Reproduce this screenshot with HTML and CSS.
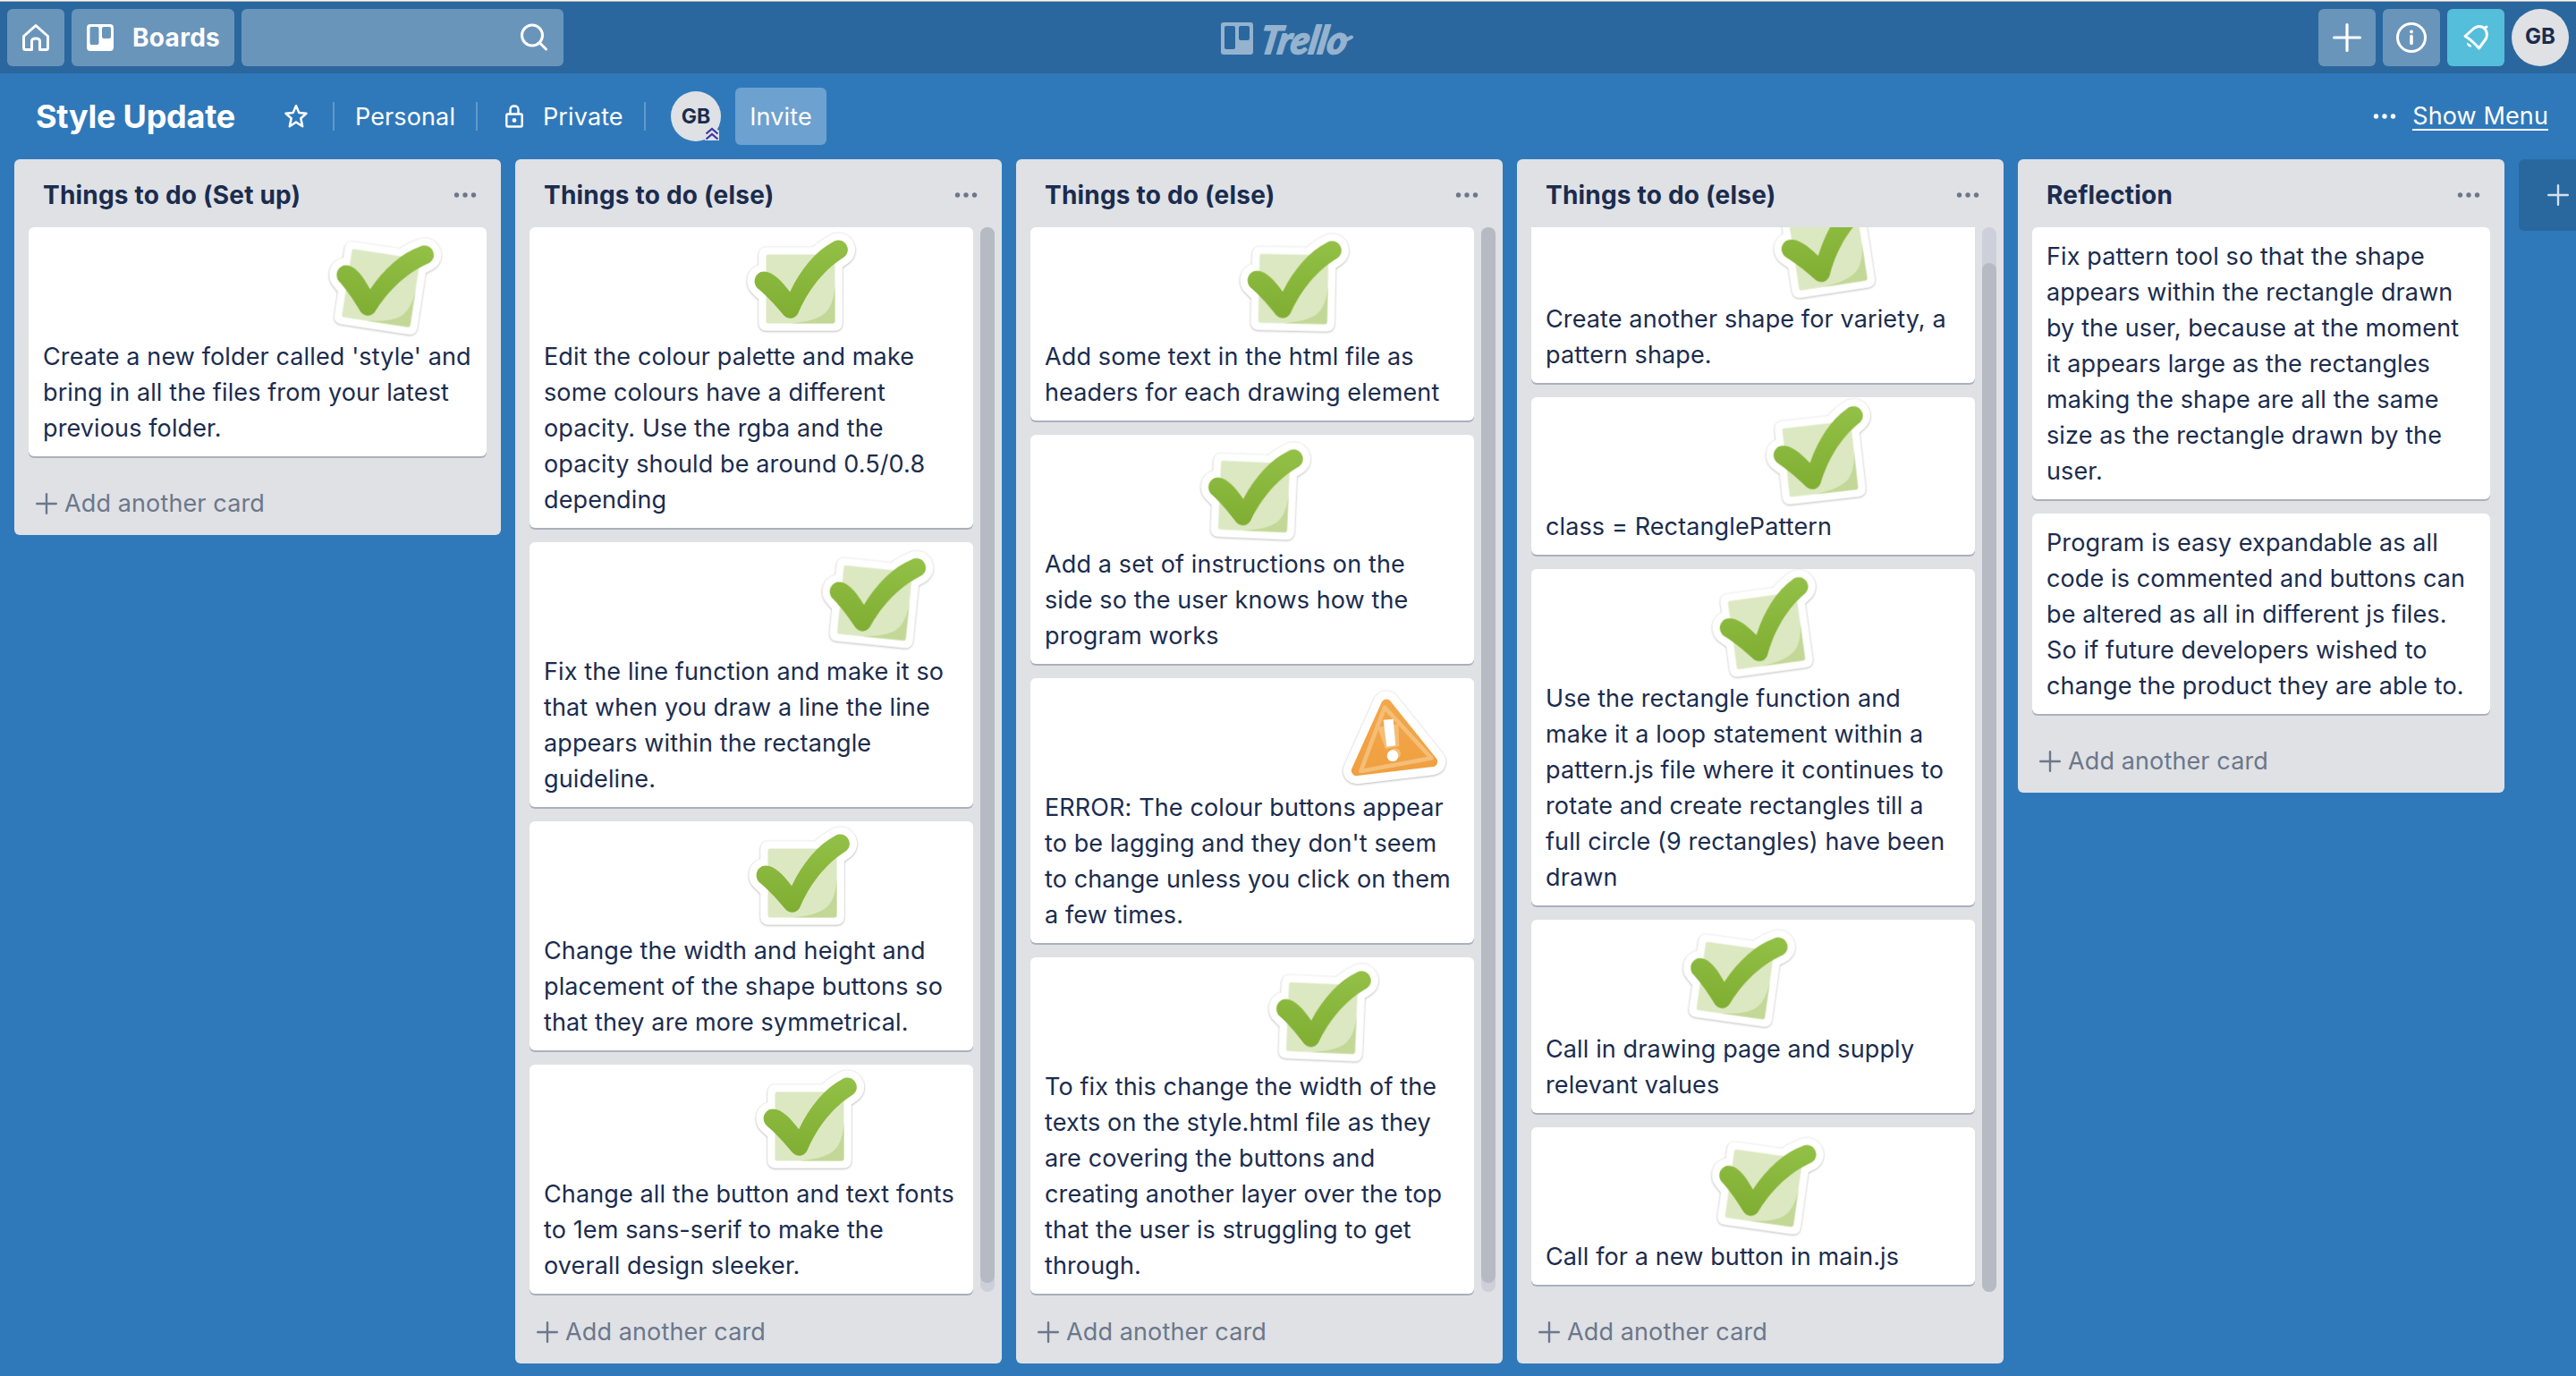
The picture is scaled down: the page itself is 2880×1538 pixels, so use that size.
FILE: index.html
```html
<!DOCTYPE html>
<html lang="en">
<head>
<meta charset="utf-8">
<title>Style Update | Trello</title>
<link rel="stylesheet" href="styles.css">
</head>
<body>
<svg class="defs" aria-hidden="true">
  <defs>
    <linearGradient id="tick-fill" x1="0" y1="0" x2="0" y2="1"><stop offset="0" stop-color="#93c046"/><stop offset="1" stop-color="#7fae33"/></linearGradient>
    <linearGradient id="warn-fill" x1="0" y1="0" x2="0" y2="1"><stop offset="0" stop-color="#f3a64a"/><stop offset="1" stop-color="#f0a040"/></linearGradient>
    <path id="tick" d="M131 159C160 159 190 190 218 227C255 150 305 90 362 60C378 50 395 54 405 66C417 82 413 100 400 110C345 145 290 200 248 293C240 317 215 322 198 307C175 280 150 250 115 220C95 205 95 180 110 167C116 161 124 159 131 159Z"/>
    <symbol id="check" viewBox="-80 -80 160 160">
      <g transform="scale(.3333) translate(-253.5 -217.5)">
        <g fill="#fff" stroke="#fff" stroke-width="50" stroke-linejoin="round"><rect x="138" y="102" width="231" height="231"/><use href="#tick"/></g>
        <rect x="138" y="102" width="231" height="231" rx="7" fill="#dce8c2"/>
        <path d="M369 205C366 255 352 288 330 303C300 322 270 328 222 333H362Q369 333 369 326Z" fill="#c3d897"/>
        <use href="#tick" fill="url(#tick-fill)"/>
      </g>
    </symbol>
    <symbol id="warning" viewBox="-80 -80 160 160">
      <g transform="scale(.3333) translate(-240 -195)">
        <path d="M210 82L364 274L110 304Z" fill="#fff" stroke="#fff" stroke-width="90" stroke-linejoin="round"/>
        <path d="M210 82L364 274L110 304Z" fill="url(#warn-fill)" stroke="url(#warn-fill)" stroke-width="35" stroke-linejoin="round"/>
        <path d="M204 92L361 262L124 306Z" fill="none" stroke="#f4be77" stroke-width="14" stroke-linejoin="round"/>
        <path d="M180 158L250 148L253 222L207 232Z" fill="#f4be77"/><circle cx="240" cy="247" r="18" fill="#f4be77"/>
        <path d="M200 134L233 131L241 220L211 224Z" fill="#fff"/><circle cx="231" cy="254" r="19" fill="#fff"/>
      </g>
    </symbol>
    <symbol id="plus" viewBox="0 0 24 24"><path d="M12 1.2V22.8M1.2 12H22.8" fill="none" stroke="currentColor" stroke-width="2.4" stroke-linecap="round"/></symbol>
    <symbol id="dots" viewBox="0 0 26 6"><g fill="currentColor"><circle cx="3.5" cy="3" r="2.7"/><circle cx="13" cy="3" r="2.7"/><circle cx="22.5" cy="3" r="2.7"/></g></symbol>
  </defs>
</svg>

<header class="topbar">
  <div class="group">
    <a class="btn home"><svg width="32" height="32" viewBox="0 0 32 32"><path d="M2.5 14.5L16 2.5L29.5 14.5V27.5Q29.5 29.5 27.5 29.5H20.5V20Q20.5 17 16 17T11.5 20V29.5H4.5Q2.5 29.5 2.5 27.5Z" fill="none" stroke="#fff" stroke-width="3" stroke-linejoin="round"/></svg></a>
    <a class="btn boards"><svg width="32" height="32" viewBox="0 0 32 32"><path fill="#fff" fill-rule="evenodd" d="M5 1H27Q31 1 31 5V27Q31 31 27 31H5Q1 31 1 27V5Q1 1 5 1ZM6 4Q4.5 4 4.5 6V22Q4.5 24 6 24H12.5Q14.5 24 14.5 22V6Q14.5 4 12.5 4ZM20 4Q18 4 18 6V15Q18 17 20 17H26Q28 17 28 15V6Q28 4 26 4Z"/></svg><span>Boards</span></a>
    <div class="btn search"><svg width="32" height="32" viewBox="0 0 32 32"><g fill="none" stroke="#fff" stroke-width="3" stroke-linecap="round"><circle cx="14" cy="13.5" r="11.5"/><path d="M22.5 22L29.5 29"/></g></svg></div>
  </div>
  <svg class="logo" width="152" height="52" viewBox="0 0 152 52"><path fill="currentColor" fill-rule="evenodd" d="M4 10H34Q37 10 37 13V43Q37 46 34 46H4Q1 46 1 43V13Q1 10 4 10ZM7 14Q5 14 5 16V38Q5 40 7 40H15Q17 40 17 38V16Q17 14 15 14ZM23 14Q21 14 21 16V28Q21 30 23 30H31Q33 30 33 28V16Q33 14 31 14Z"/><g transform="translate(43 45) skewX(-10)"><text class="wordmark" textLength="97" lengthAdjust="spacingAndGlyphs">Trello</text></g><path d="M136 29Q142 30 147 26.5" fill="none" stroke="currentColor" stroke-width="4" stroke-linecap="round"/></svg>
  <div class="group right">
    <a class="btn square"><svg width="32" height="32"><use href="#plus"/></svg></a>
    <a class="btn square"><svg width="36" height="36" viewBox="0 0 36 36"><circle cx="18" cy="18" r="15.5" fill="none" stroke="#fff" stroke-width="3"/><circle cx="18" cy="11.5" r="1.9" fill="#fff"/><path d="M18 16.5V24.5" stroke="#fff" stroke-width="3.6" stroke-linecap="round"/></svg></a>
    <a class="btn square bell"><svg width="32" height="32" viewBox="0 0 32 32"><path d="M4 14.5L14 5.5Q20 1.5 25.5 5.5Q30 11 27.5 17L19.5 28Q12 19 4 14.5ZM25.5 5.5L28 4" fill="none" stroke="#fff" stroke-width="3" stroke-linejoin="round" stroke-linecap="round"/><path d="M6 21.5Q6 27 11.5 26.5Q10 23 6 21.5Z" fill="#fff"/></svg></a>
    <span class="avatar large">GB</span>
  </div>
</header>

<div class="boardbar">
  <h1>Style Update</h1>
  <svg class="star" width="28" height="28" viewBox="0 0 28 28"><path d="M14 2.2L17.3 10L25.5 10.7L19.3 16.2L21.2 25.2L14 20.5L6.8 25.2L8.7 16.2L2.5 10.7L10.7 10Z" fill="none" stroke="#fff" stroke-width="2.5" stroke-linejoin="round"/></svg>
  <i class="rule r1"></i>
  <span class="item personal">Personal</span>
  <i class="rule r2"></i>
  <svg class="lock" width="20" height="26" viewBox="0 0 20 26"><path d="M2.5 10.5H17.5Q18.7 10.5 18.7 12V23Q18.7 24.5 17.5 24.5H2.5Q1.3 24.5 1.3 23V12Q1.3 10.5 2.5 10.5ZM5.5 10V6Q5.5 1.5 10 1.5T14.5 6V10" fill="none" stroke="#fff" stroke-width="2.4"/><circle cx="10" cy="17.5" r="2.4" fill="#fff"/></svg>
  <span class="item private">Private</span>
  <i class="rule r3"></i>
  <span class="avatar small">GB<svg class="chevrons" width="18" height="16" viewBox="0 0 18 16"><path d="M1 4L9 -1L17 4V15H1Z" fill="#dfe1e5"/><path d="M2.5 7.5L9 2L15.5 7.5M2.5 13.5L9 8L15.5 13.5" fill="none" stroke="#3a34a6" stroke-width="2.2"/></svg></span>
  <a class="invite">Invite</a>
  <a class="menu"><svg width="26" height="6"><use href="#dots"/></svg><span>Show Menu</span></a>
</div>

<main class="board">
  <section class="list">
    <div class="head"><h2>Things to do (Set up)</h2><svg width="26" height="6"><use href="#dots"/></svg></div>
    <div class="cards">
      <article class="card stickered">Create a new folder called 'style' and<br>bring in all the files from your latest<br>previous folder.<svg class="sticker" style="--x:394px;--y:68px;--r:8.7deg"><use href="#check"/></svg></article>
    </div>
    <a class="add"><svg width="24" height="24"><use href="#plus"/></svg>Add another card</a>
  </section>

  <section class="list full">
    <div class="head"><h2>Things to do (else)</h2><svg width="26" height="6"><use href="#dots"/></svg></div>
    <div class="cards">
      <article class="card stickered">Edit the colour palette and make<br>some colours have a different<br>opacity. Use the rgba and the<br>opacity should be around 0.5/0.8<br>depending<svg class="sticker" style="--x:302.5px;--y:68.5px;--r:0deg"><use href="#check"/></svg></article>
      <article class="card stickered">Fix the line function and make it so<br>that when you draw a line the line<br>appears within the rectangle<br>guideline.<svg class="sticker" style="--x:385.7px;--y:68.3px;--r:5.8deg"><use href="#check"/></svg></article>
      <article class="card stickered">Change the width and height and<br>placement of the shape buttons so<br>that they are more symmetrical.<svg class="sticker" style="--x:304.5px;--y:68.5px;--r:0deg"><use href="#check"/></svg></article>
      <article class="card stickered">Change all the button and text fonts<br>to 1em sans-serif to make the<br>overall design sleeker.<svg class="sticker" style="--x:312.5px;--y:68.5px;--r:0deg"><use href="#check"/></svg></article>
      <div class="track"><div class="thumb"></div></div>
    </div>
    <a class="add"><svg width="24" height="24"><use href="#plus"/></svg>Add another card</a>
  </section>

  <section class="list full">
    <div class="head"><h2>Things to do (else)</h2><svg width="26" height="6"><use href="#dots"/></svg></div>
    <div class="cards">
      <article class="card stickered">Add some text in the html file as<br>headers for each drawing element<svg class="sticker" style="--x:294.3px;--y:68.8px;--r:1.2deg"><use href="#check"/></svg></article>
      <article class="card stickered">Add a set of instructions on the<br>side so the user knows how the<br>program works<svg class="sticker" style="--x:250px;--y:68.8px;--r:2.5deg"><use href="#check"/></svg></article>
      <article class="card stickered">ERROR: The colour buttons appear<br>to be lagging and they don't seem<br>to change unless you click on them<br>a few times.<svg class="sticker" style="--x:408px;--y:67px;--r:0deg"><use href="#warning"/></svg></article>
      <article class="card stickered">To fix this change the width of the<br>texts on the style.html file as they<br>are covering the buttons and<br>creating another layer over the top<br>that the user is struggling to get<br>through.<svg class="sticker" style="--x:326.3px;--y:68.4px;--r:2.5deg"><use href="#check"/></svg></article>
      <div class="track"><div class="thumb"></div></div>
    </div>
    <a class="add"><svg width="24" height="24"><use href="#plus"/></svg>Add another card</a>
  </section>

  <section class="list full scrolled">
    <div class="head"><h2>Things to do (else)</h2><svg width="26" height="6"><use href="#dots"/></svg></div>
    <div class="cards">
      <article class="card stickered">Create another shape for variety, a<br>pattern shape.<svg class="sticker" style="--x:331.5px;--y:68.5px;--r:-8.7deg"><use href="#check"/></svg></article>
      <article class="card stickered">class = RectanglePattern<svg class="sticker" style="--x:323.1px;--y:69px;--r:-6.4deg"><use href="#check"/></svg></article>
      <article class="card stickered">Use the rectangle function and<br>make it a loop statement within a<br>pattern.js file where it continues to<br>rotate and create rectangles till a<br>full circle (9 rectangles) have been<br>drawn<svg class="sticker" style="--x:263.2px;--y:68.7px;--r:-7.8deg"><use href="#check"/></svg></article>
      <article class="card stickered">Call in drawing page and supply<br>relevant values<svg class="sticker" style="--x:227.5px;--y:68px;--r:8deg"><use href="#check"/></svg></article>
      <article class="card stickered">Call for a new button in main.js<svg class="sticker" style="--x:260px;--y:68px;--r:8deg"><use href="#check"/></svg></article>
      <div class="track"><div class="thumb"></div></div>
    </div>
    <a class="add"><svg width="24" height="24"><use href="#plus"/></svg>Add another card</a>
  </section>

  <section class="list">
    <div class="head"><h2>Reflection</h2><svg width="26" height="6"><use href="#dots"/></svg></div>
    <div class="cards">
      <article class="card">Fix pattern tool so that the shape<br>appears within the rectangle drawn<br>by the user, because at the moment<br>it appears large as the rectangles<br>making the shape are all the same<br>size as the rectangle drawn by the<br>user.</article>
      <article class="card">Program is easy expandable as all<br>code is commented and buttons can<br>be altered as all in different js files.<br>So if future developers wished to<br>change the product they are able to.</article>
    </div>
    <a class="add"><svg width="24" height="24"><use href="#plus"/></svg>Add another card</a>
  </section>

  <a class="newlist"><svg width="24" height="24"><use href="#plus"/></svg></a>
</main>
</body>
</html>
```
FILE: styles.css
```css
* { box-sizing: border-box; }
body {
  margin: 0;
  width: 2880px;
  height: 1538px;
  overflow: hidden;
  background: #2f79bb;
  color: #1b2c4e;
  font: 400 27px/40px Inter, "Liberation Sans", sans-serif;
  letter-spacing: .12px;
  white-space: nowrap;
}
svg { display: block; flex: none; overflow: visible; }
.defs { position: absolute; width: 0; height: 0; }
h1, h2 { margin: 0; }

/* top navigation */
.topbar {
  display: flex;
  justify-content: space-between;
  align-items: center;
  height: 82px;
  padding: 2px 8px 0;
  background: linear-gradient(#f4f4f4 0 1px, #b5b8ba 1px 2px, #2a679e 2px);
}
.group { display: flex; gap: 8px; width: 622px; }
.group.right { justify-content: flex-end; }
.btn {
  display: flex;
  align-items: center;
  height: 64px;
  border-radius: 6px;
  background: rgba(255, 255, 255, .3);
  color: #fff;
}
.home { width: 64px; justify-content: center; }
.boards { width: 182px; padding-left: 16px; font-size: 28px; font-weight: 700; }
.boards span { margin-left: 20px; letter-spacing: .3px; }
.search { width: 360px; justify-content: flex-end; padding-right: 17px; }
.square { width: 64px; justify-content: center; }
.bell { background: #54bedb; }
.logo { color: #95b3cf; margin-top: -2px; }
.wordmark {
  font: italic 700 43px Lato, sans-serif;
  letter-spacing: 0;
  fill: currentColor;
  stroke: currentColor;
  stroke-width: 2px;
  stroke-linejoin: round;
}
.avatar {
  display: flex;
  align-items: center;
  justify-content: center;
  border-radius: 50%;
  background: #dfe1e5;
  font-weight: 700;
}
.avatar.large { width: 64px; height: 64px; font-size: 24px; padding-bottom: 2px; }
.avatar.small { position: relative; width: 56px; height: 56px; margin-left: 28px; font-size: 23px; color: #1b2c4e; }
.chevrons { position: absolute; right: 1px; bottom: 0; }

/* board header */
.boardbar {
  display: flex;
  align-items: center;
  height: 96px;
  padding: 0 31px 0 40px;
  color: #fff;
}
h1 { width: 277px; font-size: 36px; font-weight: 700; letter-spacing: -.25px; }
.rule { width: 2px; height: 32px; background: rgba(255, 255, 255, .24); }
.r1 { margin-left: 27px; }
.item { padding-top: 2px; }
.personal { width: 135px; margin-left: 23px; }
.lock { margin-left: 31px; }
.private { width: 113px; margin-left: 22px; }
.invite {
  width: 102px;
  height: 64px;
  margin-left: 16px;
  border-radius: 6px;
  background: rgba(255, 255, 255, .3);
  line-height: 65px;
  text-align: center;
}
.menu { display: flex; align-items: center; gap: 18px; margin-left: auto; }
.menu span { padding-top: 1px; line-height: 28px; border-bottom: 2px solid #fff; }

/* lists */
.board { display: flex; align-items: flex-start; gap: 16px; padding-left: 16px; }
.list { flex: none; width: 544px; border-radius: 6px; background: #dfe1e5; }
.head {
  display: flex;
  justify-content: space-between;
  align-items: center;
  height: 76px;
  padding: 4px 27px 0 32px;
  color: #6c778b;
}
h2 { font-size: 28px; font-weight: 700; letter-spacing: .2px; color: #1b2c4e; }
.cards { display: flex; flex-direction: column; gap: 16px; padding: 0 16px 2px; }
.full .cards { position: relative; height: 1194px; padding-right: 32px; overflow: hidden; }
.card {
  position: relative;
  flex: none;
  padding: 13px 16px 11px;
  border-radius: 6px;
  background: #fff;
  box-shadow: 0 2px 0 #a9b0be;
}
.card.stickered { padding-top: 125px; }
.sticker {
  position: absolute;
  left: calc(var(--x) - 80px);
  top: calc(var(--y) - 80px);
  width: 160px;
  height: 160px;
  transform: rotate(var(--r));
  filter: drop-shadow(0 0 1px rgba(0, 0, 0, .12)) drop-shadow(0 1.5px 1.2px rgba(0, 0, 0, .22));
}
.scrolled .card:first-child { margin-top: -42px; }
.track {
  position: absolute;
  top: 0;
  right: 8px;
  width: 16px;
  height: 1190px;
  border-radius: 8px;
  background: #cdd0da;
}
.thumb { height: 1180px; border-radius: 8px; background: #b5bac3; }
.scrolled .track { padding-top: 40px; }
.scrolled .thumb { height: 1150px; }
.add {
  display: flex;
  align-items: center;
  gap: 8px;
  height: 86px;
  padding: 15px 0 0 24px;
  color: #6c778b;
}
.full .add { height: 76px; padding-top: 5px; }
.newlist {
  flex: none;
  width: 64px;
  height: 80px;
  padding: 28px 0 28px 32px;
  border-radius: 6px 0 0 6px;
  background: #29689f;
  color: #d4e1ec;
}
```
